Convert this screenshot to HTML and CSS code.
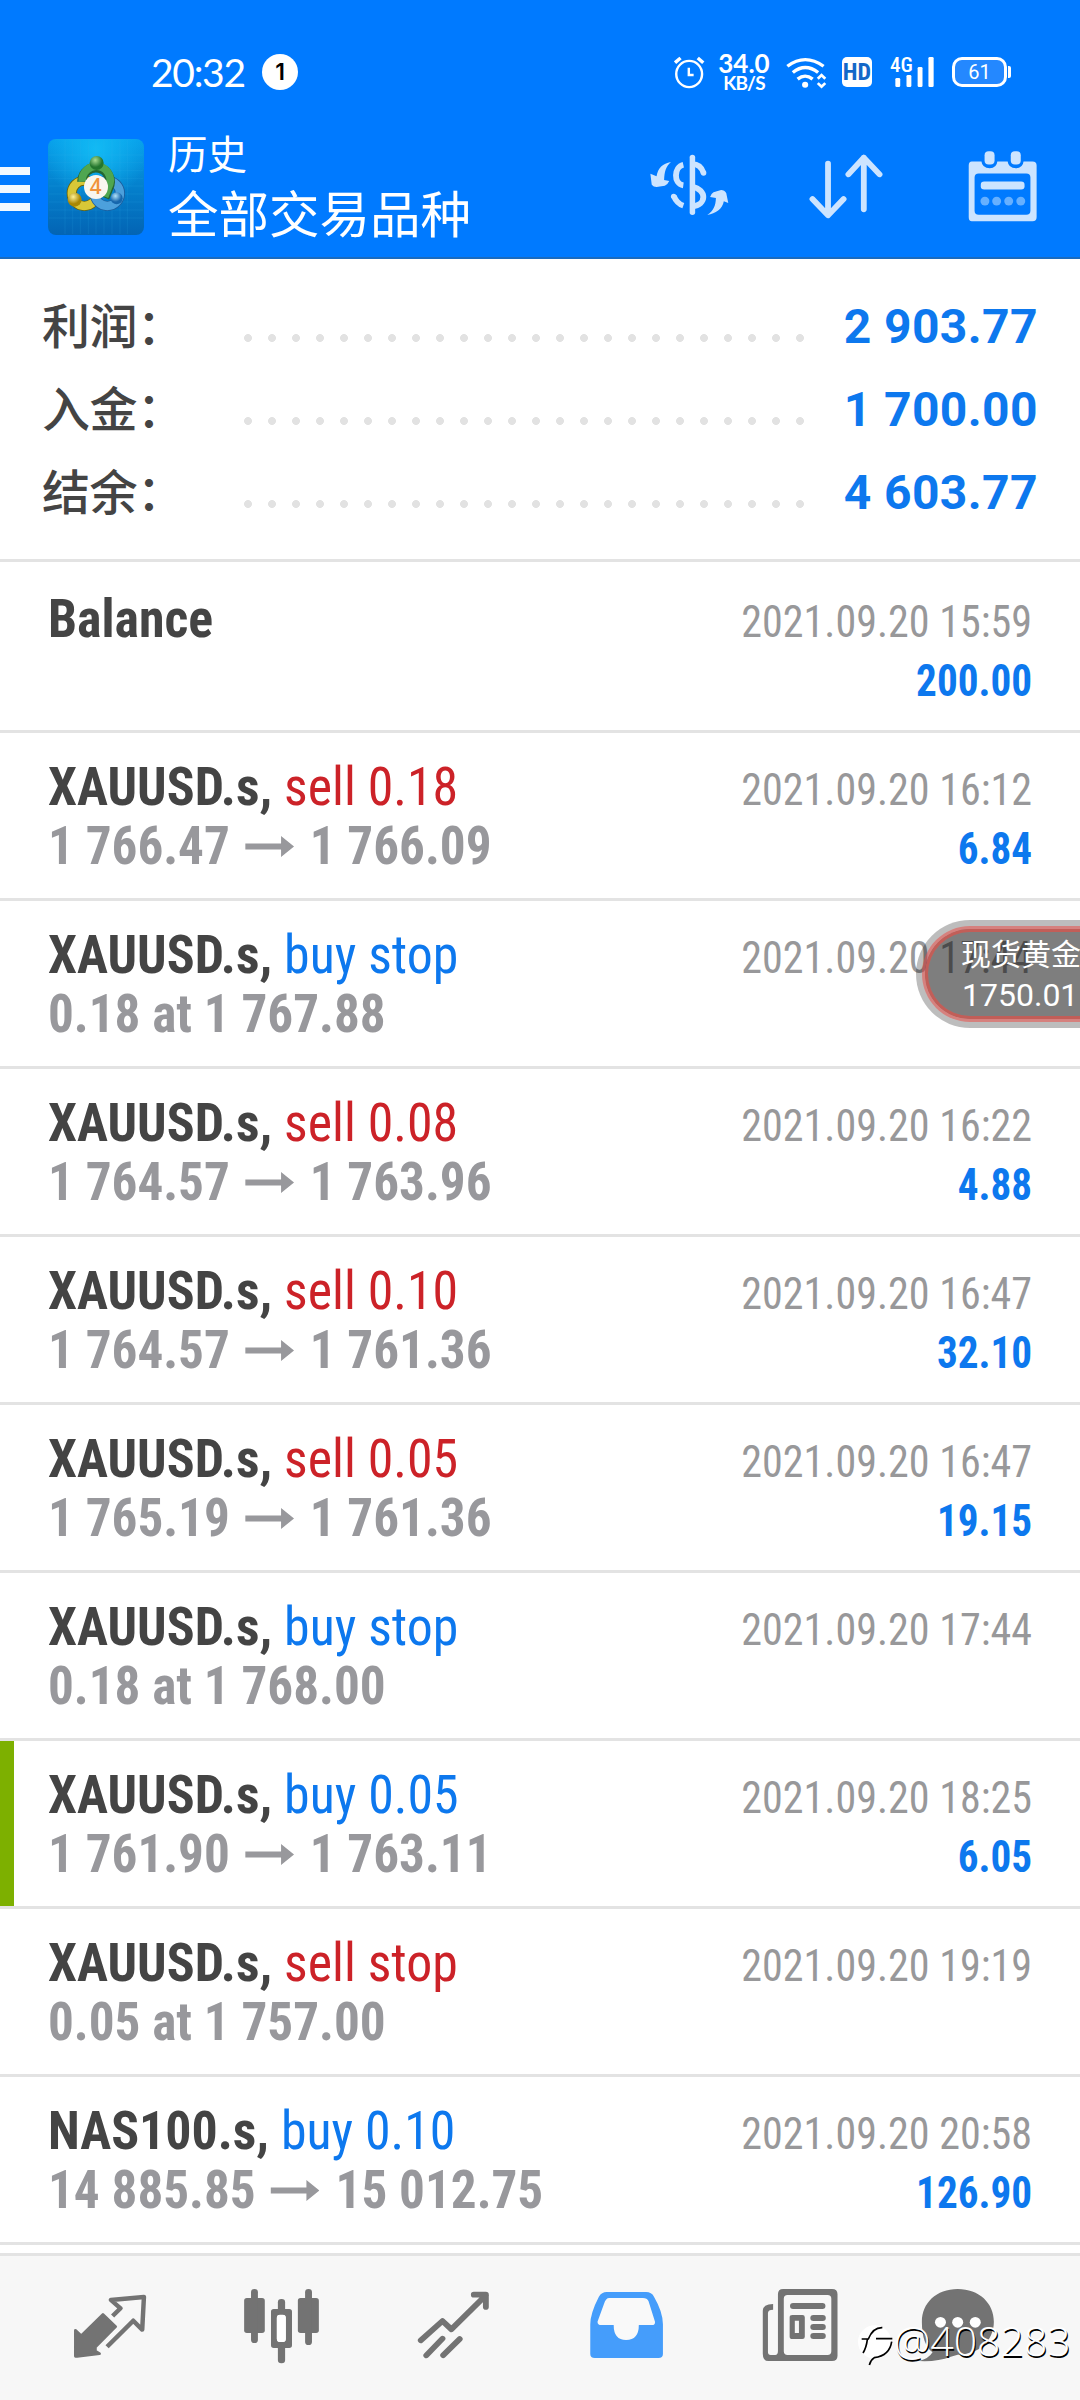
FILE: index.html
```html
<!DOCTYPE html>
<html lang="zh-CN">
<head>
<meta charset="utf-8">
<title>历史</title>
<link rel="stylesheet" href="styles.css">
</head>
<body>
<div class="screen">
  <header class="header">
    <div class="status">
      <span class="clock">20:32</span>
      <span class="count">1</span>
      <div class="indicators">
        <svg class="alarm" viewBox="388 168 90 99" preserveAspectRatio="none" fill="none" stroke="#fff" stroke-width="7"><ellipse cx="432" cy="222" rx="37.500" ry="39.500"/><path d="M431 203v22h14"/><path stroke-width="10" d="M391 188l16-14M473 188l-16-14"/></svg>
        <span class="speed"><b>34.0</b><small>KB/S</small></span>
        <svg class="wifi" viewBox="716 165 120 100" preserveAspectRatio="none" fill="none" stroke="#fff" stroke-width="10"><path d="M720 196q52-40 106 0M736 215q36-30 74 0M750 235q22-18 44 0"/><circle cx="772" cy="252" r="9" fill="#fff" stroke="none"/><path stroke-width="8" d="M809 234l11-11 11 11M809 247l11 11 11-11"/></svg>
        <span class="hd">HD</span>
        <span class="signal"><span class="net">4G</span>
          <svg class="bars" viewBox="1036 171 112 90" preserveAspectRatio="none" fill="#fff"><rect x="1037" y="234" width="14" height="27" rx="4"/><rect x="1069" y="225" width="14" height="36" rx="4"/><rect x="1101" y="201" width="14" height="60" rx="4"/><rect x="1132" y="171" width="15" height="90" rx="4"/></svg>
        </span>
        <span class="battery">61</span>
      </div>
    </div>
    <div class="titlebar">
      <div class="menu"><i></i><i></i><i></i></div>
      <svg class="logo" viewBox="24 27 288 288">
        <defs>
          <linearGradient id="bg" x2="0" y2="1"><stop offset="0" stop-color="#079fea"/><stop offset=".5" stop-color="#0480cc"/><stop offset="1" stop-color="#0364b4"/></linearGradient>
          <radialGradient id="glow" cx=".5" cy=".1" r=".55"><stop offset="0" stop-color="#12baf4"/><stop offset="1" stop-color="#12baf4" stop-opacity="0"/></radialGradient>
          <radialGradient id="g" cx=".4" cy=".3"><stop offset="0" stop-color="#a8dc92"/><stop offset="1" stop-color="#23762d"/></radialGradient>
          <radialGradient id="y" cx=".4" cy=".3"><stop offset="0" stop-color="#fff296"/><stop offset="1" stop-color="#a88705"/></radialGradient>
          <radialGradient id="b" cx=".4" cy=".3"><stop offset="0" stop-color="#b0e2fa"/><stop offset="1" stop-color="#1767ad"/></radialGradient>
        </defs>
        <rect x="24" y="27" width="288" height="288" rx="24" fill="url(#bg)"/>
        <rect x="24" y="27" width="288" height="288" rx="24" fill="url(#glow)"/>
        <path d="M75 30v282M98 30v282M121 30v282M145 30v282M168 30v282M192 30v282M216 30v282M240 30v282M262 30v282M27 75h282M27 98h282M27 121h282M27 145h282M27 168h282M27 192h282M27 216h282M27 240h282M27 264h282" stroke="#35b4ec" stroke-opacity=".22" stroke-width="2"/>
        <circle cx="133" cy="190" r="38" fill="none" stroke="#6d6407" stroke-width="30"/><circle cx="133" cy="190" r="38" fill="none" stroke="#d8c737" stroke-width="25"/>
        <circle cx="202" cy="190" r="38" fill="none" stroke="#1d5d9c" stroke-width="30"/><circle cx="202" cy="190" r="38" fill="none" stroke="#4ca0dc" stroke-width="25"/>
        <path d="M126 155a42 42 0 1 1 80 18l-12 30" fill="none" stroke="#246632" stroke-width="29"/><path d="M127 155a42 42 0 1 1 78 17l-11 28" fill="none" stroke="#4fa650" stroke-width="23"/>
        <circle cx="170" cy="99" r="21" fill="url(#g)"/><circle cx="104" cy="209" r="21" fill="url(#y)"/><circle cx="230" cy="205" r="18" fill="url(#b)"/>
        <circle cx="168" cy="171" r="36" fill="#f9f6ef"/>
        <text x="167" y="193" class="four" text-anchor="middle">4</text>
      </svg>
      <div class="titles"><span class="sub">历史</span><span class="main">全部交易品种</span></div>
      <div class="actions">
        <svg class="act-currency" viewBox="318 450 236 216" preserveAspectRatio="none" fill="none" stroke="#cce4ff" stroke-width="17">
          <path d="M444.500 472v165" stroke-width="16" stroke-linecap="round"/>
          <path d="M418 494c-27 6-30 58 0 62M390 588c5 12 13 24 28 29M444 492c18 0 28 11 33 27M444 560c43 8 43 55 0 59"/><circle cx="390" cy="589" r="8" fill="#cce4ff" stroke="none"/><circle cx="477" cy="519" r="8" fill="#cce4ff" stroke="none"/>
          <path fill="#cce4ff" stroke="none" d="M382 486c-24 4-38 18-42 43l-18-8 4 33q5 7 14 7l24-4q9-4 13-14l-15-3c1-25 5-40 20-54zM488 645c24-4 44-17 48-41l13 5-6-30q-5-9-15-9l-22 7q-8 5-10 14l17 3c-1 23-6 37-25 51z"/>
        </svg>
        <svg class="act-sort" viewBox="778 450 222 216" preserveAspectRatio="none" fill="none" stroke="#cce4ff" stroke-width="17" stroke-linecap="round" stroke-linejoin="round"><path d="M836.500 491v154M791 597l45.500 49 45.500-49M941 628V473M896 523l45-50 46 50"/></svg>
        <svg class="act-calendar" viewBox="1238 448 206 220" preserveAspectRatio="none"><path fill="#cce4ff" fill-rule="evenodd" d="M1252 483h28q2 20 24 20 20 0 22-20h30q2 20 24 20 20 0 22-20h26q12 0 12 12v156q0 12-12 12h-176q-9 0-9-12V495q0-12 9-12zM1272 519q-12 0-12 12v100q0 12 12 12h138q12 0 12-12V531q0-12-12-12z"/><rect x="1289" y="452" width="29" height="40" rx="12" fill="#cce4ff"/><rect x="1365" y="452" width="29" height="40" rx="12" fill="#cce4ff"/><rect x="1278" y="543" width="127" height="24" rx="10" fill="#cce4ff"/><g fill="#66b0ff"><circle cx="1290" cy="602" r="13"/><circle cx="1324" cy="602" r="13"/><circle cx="1359" cy="602" r="13"/><circle cx="1394" cy="602" r="13"/></g></svg>
      </div>
    </div>
  </header>

  <section class="summary">
    <div class="sum"><span class="label">利润：</span><span class="dots"></span><span class="value">2 903.77</span></div>
    <div class="sum"><span class="label">入金：</span><span class="dots"></span><span class="value">1 700.00</span></div>
    <div class="sum"><span class="label">结余：</span><span class="dots"></span><span class="value">4 603.77</span></div>
  </section>

  <main class="list">
    <article class="deal first"><div class="left"><div class="name">Balance</div></div><div class="right"><div class="date">2021.09.20 15:59</div><div class="amount">200.00</div></div></article>
    <article class="deal"><div class="left"><div class="name">XAUUSD.s, <span class="sell">sell 0.18</span></div><div class="price">1 766.47<svg class="arrow" viewBox="0 0 49 21" preserveAspectRatio="none"><path d="M0 7.500h36V0l13 10.500L36 21v-7.500H0z"/></svg>1 766.09</div></div><div class="right"><div class="date">2021.09.20 16:12</div><div class="amount">6.84</div></div></article>
    <article class="deal"><div class="left"><div class="name">XAUUSD.s, <span class="buy">buy stop</span></div><div class="price">0.18 at 1 767.88</div></div><div class="right"><div class="date">2021.09.20 17:44</div></div></article>
    <article class="deal"><div class="left"><div class="name">XAUUSD.s, <span class="sell">sell 0.08</span></div><div class="price">1 764.57<svg class="arrow" viewBox="0 0 49 21" preserveAspectRatio="none"><path d="M0 7.500h36V0l13 10.500L36 21v-7.500H0z"/></svg>1 763.96</div></div><div class="right"><div class="date">2021.09.20 16:22</div><div class="amount">4.88</div></div></article>
    <article class="deal"><div class="left"><div class="name">XAUUSD.s, <span class="sell">sell 0.10</span></div><div class="price">1 764.57<svg class="arrow" viewBox="0 0 49 21" preserveAspectRatio="none"><path d="M0 7.500h36V0l13 10.500L36 21v-7.500H0z"/></svg>1 761.36</div></div><div class="right"><div class="date">2021.09.20 16:47</div><div class="amount">32.10</div></div></article>
    <article class="deal"><div class="left"><div class="name">XAUUSD.s, <span class="sell">sell 0.05</span></div><div class="price">1 765.19<svg class="arrow" viewBox="0 0 49 21" preserveAspectRatio="none"><path d="M0 7.500h36V0l13 10.500L36 21v-7.500H0z"/></svg>1 761.36</div></div><div class="right"><div class="date">2021.09.20 16:47</div><div class="amount">19.15</div></div></article>
    <article class="deal"><div class="left"><div class="name">XAUUSD.s, <span class="buy">buy stop</span></div><div class="price">0.18 at 1 768.00</div></div><div class="right"><div class="date">2021.09.20 17:44</div></div></article>
    <article class="deal marked"><div class="left"><div class="name">XAUUSD.s, <span class="buy">buy 0.05</span></div><div class="price">1 761.90<svg class="arrow" viewBox="0 0 49 21" preserveAspectRatio="none"><path d="M0 7.500h36V0l13 10.500L36 21v-7.500H0z"/></svg>1 763.11</div></div><div class="right"><div class="date">2021.09.20 18:25</div><div class="amount">6.05</div></div></article>
    <article class="deal"><div class="left"><div class="name">XAUUSD.s, <span class="sell">sell stop</span></div><div class="price">0.05 at 1 757.00</div></div><div class="right"><div class="date">2021.09.20 19:19</div></div></article>
    <article class="deal"><div class="left"><div class="name">NAS100.s, <span class="buy">buy 0.10</span></div><div class="price">14 885.85<svg class="arrow" viewBox="0 0 49 21" preserveAspectRatio="none"><path d="M0 7.500h36V0l13 10.500L36 21v-7.500H0z"/></svg>15 012.75</div></div><div class="right"><div class="date">2021.09.20 20:58</div><div class="amount">126.90</div></div></article>
  </main>

  <nav class="tabs">
    <svg viewBox="69.700 78 499.500 432" preserveAspectRatio="none"><path fill="#737373" stroke="#737373" stroke-width="8" stroke-linejoin="round" d="M219 301l17 16 63-64 37 37-59 61 0 12 12 8-65 8h-5z"/><path fill="none" stroke="#737373" stroke-width="13" stroke-linejoin="round" d="M327 258l23-23-28-25 96-9-5 98-26-27-76 78" stroke-linecap="butt"/></svg>
    <svg viewBox="569.200 78 499.500 432" preserveAspectRatio="none"><g fill="#737373"><rect x="709" y="204" width="60" height="105" rx="8"/><rect x="729" y="177" width="20" height="162" rx="10"/><rect x="865" y="204" width="61" height="105" rx="8"/><rect x="886" y="177" width="20" height="168" rx="10"/><rect x="807" y="207" width="21" height="50" rx="10"/><rect x="807" y="345" width="21" height="55" rx="10"/><path fill-rule="evenodd" d="M795 237h45q8 0 8 8v101q0 8-8 8h-45q-8 0-8-8V245q0-8 8-8zM814 254q-10 0-10 10v62q0 10 10 10h6q10 0 10-10v-62q0-10-10-10z"/></g><rect x="804" y="254" width="26" height="82" rx="9" fill="#fff"/></svg>
    <svg viewBox="1068.700 78 499.500 432" preserveAspectRatio="none" fill="none" stroke="#737373" stroke-width="17" stroke-linecap="round" stroke-linejoin="round"><path d="M1222 331l63-58 26 25 100-102M1376 194h35v37M1238 376l47-50M1287 376l48-49"/></svg>
    <svg viewBox="0 78 499.500 432" preserveAspectRatio="none"><path fill="#459dfb" d="M194 186h114q16 0 23 14 26 46 26 83v89q0 12-13 12H159q-13 0-13-12v-89q0-33 25-83 8-14 23-14z"/><path fill="#f9f9f9" d="M201 204h98q12 0 16 9l19 62q1 10-9 10h-38q0 45-37 45-36 0-36-45h-36q-11 0-11-10l19-54q5-17 15-17z"/></svg>
    <svg viewBox="499.500 78 499.500 432" preserveAspectRatio="none"><path fill="#737373" fill-rule="evenodd" d="M706 177h142q16 0 16 16v184q0 16-16 16H663q-16 0-16-22V242q0-19 30-20v17q-15 0-15 10v117q0 9 8 9h13q8 0 8-12V193q0-16 15-16zM719 195q-11 0-11 11v158q0 11 11 11h116q11 0 11-11V206q0-11-11-11z"/><g fill="#737373"><rect x="726" y="219" width="103" height="18" rx="9"/><path fill-rule="evenodd" d="M733 255h29q7 0 7 7v58q0 7-7 7h-29q-8 0-8-7v-58q0-7 8-7zM740 272v37h12v-37z"/><rect x="785" y="255" width="45" height="18" rx="9"/><rect x="785" y="282" width="45" height="18" rx="9"/><rect x="785" y="309" width="45" height="18" rx="9"/></g></svg>
    <svg viewBox="999 78 499.500 432" preserveAspectRatio="none"><path fill="#737373" d="M1213 177c62 0 105 42 105 98s-43 99-105 99l-20 6q-40 16-92 13 28-7 39-26c-20-16-31-45-31-92 0-56 42-98 104-98z"/><g fill="#fff"><circle cx="1163" cy="277" r="16"/><circle cx="1213" cy="277" r="16"/><circle cx="1264" cy="277" r="16"/></g></svg>
  </nav>

  <div class="floating"><div class="float-ring"><span class="float-name">现货黄金</span><span class="float-price">1750.01</span></div></div>

  <div class="watermark">
    <svg viewBox="50 125 108 135" width="36" height="45"><circle cx="103" cy="185" r="50" fill="#fff"/><path fill="none" stroke="#000" stroke-width="5" d="M107 175h49M64 176h20q14-35 42-34M81 178q-3 24-13 40M154 184q-6 42-52 48-12 8-15 22"/></svg>
    <span>@408283</span>
  </div>
</div>
</body>
</html>
```
FILE: styles.css
```css
* { box-sizing: border-box; }
body { margin: 0; background: #fff; }
.screen {
  position: relative;
  width: 1080px;
  height: 2400px;
  overflow: hidden;
  display: flex;
  flex-direction: column;
  background: #fff;
  font-family: Roboto, "Noto Sans CJK SC", sans-serif;
}
svg { display: block; flex: none; }

/* header */
.header { height: 259px; background: #007aff; border-bottom: 2px solid #1a6bbf; color: #fff; flex: none; }
.status { height: 130px; padding: 14px 69px 0 151px; display: flex; align-items: center; }
.clock { width: 111px; font: 400 39px/1 Lato, sans-serif; letter-spacing: -1.300px; }
.count { width: 36px; height: 36px; border-radius: 50%; background: #fff; color: #000; font: 600 23px/37px Inter, sans-serif; text-align: center; }
.indicators { margin-left: auto; display: flex; align-items: center; }
.alarm { width: 31px; height: 33px; }
.speed { width: 52px; margin-left: 13px; display: flex; flex-direction: column; align-items: center; font-family: Lato, sans-serif; }
.speed b { font-size: 26px; line-height: 22px; font-weight: 700; }
.speed small { font-size: 19px; line-height: 18px; font-weight: 700; letter-spacing: -.8px; }
.wifi { width: 41px; height: 33px; margin-left: 16px; }
.hd { width: 30px; height: 30px; margin-left: 15px; border-radius: 5px; background: #fff; color: #1468c8; font: 700 24px/30px "Roboto Condensed", sans-serif; text-align: center; }
.signal { margin-left: 18px; height: 30px; display: flex; align-items: flex-end; width: 44px; }
.net { width: 5px; align-self: flex-start; font: 500 21px/16px "Roboto Condensed", sans-serif; }
.bars { width: 39px; height: 30px; }
.battery {
  position: relative; width: 55px; height: 30px; margin: 0 4px 0 18px; border: 3px solid #fff; border-radius: 10px;
  background: #2488ff; font: 400 20px/25px Roboto, sans-serif; text-align: center;
}
.battery::after { content: ""; position: absolute; left: 53px; top: 6px; width: 3px; height: 12px; border-radius: 0 2px 2px 0; background: #fff; }
.titlebar { display: flex; height: 127px; }
.menu { width: 30px; padding-top: 37px; display: flex; flex-direction: column; gap: 10px; }
.menu i { height: 8px; background: #f2f9ff; }
.logo { width: 96px; height: 96px; margin: 9px 0 0 18px; }
.four { font: 600 62px "Open Sans", sans-serif; fill: #f0923c; }
.titles { margin: -2px 0 0 24px; display: flex; flex-direction: column; font-family: "Noto Sans CJK SC", sans-serif; font-weight: 400; }
.sub { font-size: 39.500px; line-height: 48px; }
.main { font-size: 50.500px; line-height: 70px; }
.actions { margin-left: auto; padding: 20px 42px 0 0; display: flex; }
.act-currency { width: 81px; height: 72px; }
.act-sort { width: 76px; height: 72px; margin-left: 78px; }
.act-calendar { width: 71px; height: 73px; margin-left: 83px; }

/* totals */
.summary { height: 303px; padding: 26px 42px 0; border-bottom: 3px solid #e3e3e3; flex: none; }
.sum { height: 83px; display: flex; }
.label { width: 196px; font: 500 48px/76px "Noto Sans CJK SC", sans-serif; letter-spacing: -.5px; color: #444; }
.dots { width: 576px; height: 8px; margin: 49px 0 0 -2px; background: radial-gradient(circle at 12px 4px, #e2e2e2 3.600px, transparent 4.300px) 0 0 / 24px 8px; }
.value { margin-left: auto; font-weight: 700; font-size: 48px; line-height: 83px; letter-spacing: .4px; color: #0d78ee; }

/* deals */
.list { flex: none; font-family: "Roboto Condensed", sans-serif; }
.deal { height: 168px; padding: 24px 48px 0; border-bottom: 3px solid #e3e3e3; display: flex; justify-content: space-between; white-space: nowrap; }
.first { height: 171px; padding-top: 27px; }
.marked { box-shadow: inset 14px 0 #7db000; }
.name, .price { font-size: 54.500px; line-height: 59px; font-weight: 700; color: #444; transform: scaleX(.951); transform-origin: 0 0; }
.price { color: #98989c; display: flex; transform: scaleX(.939); }
.name span { font-weight: 400; }
.name .sell { color: #cc2228; }
.name .buy { color: #0d78ee; }
.arrow { width: 52px; height: 21px; margin: 20px 17px 0 16px; fill: #98989c; }
.right { padding-top: 3px; text-align: right; }
.date, .amount { font-size: 45px; line-height: 59px; color: #98989a; transform: scaleX(.935); transform-origin: 100% 0; }
.amount { font-weight: 700; color: #0d78ee; transform: scaleX(.915); }

/* bottom tabs */
.tabs { margin-top: 8px; height: 147px; border-top: 3px solid #e3e3e3; background: #f7f7f7; padding-left: 24px; display: flex; flex: none; }
.tabs svg { width: 172px; height: 144px; }

/* price bubble over the list */
.floating { position: absolute; left: 916px; top: 920px; width: 240px; height: 108px; border-radius: 54px; padding: 6px; overflow: hidden; background: rgba(0, 0, 0, .26); }
.float-ring { height: 96px; border-radius: 48px; border: 3px solid rgba(235, 80, 75, .55); box-shadow: inset 0 0 0 3px #c25e58; background: rgba(0, 0, 0, .33); background-clip: padding-box; padding: 6px 0 0 36px; display: flex; flex-direction: column; color: #fff; }
.float-name { font-size: 30px; line-height: 39px; }
.float-price { font-size: 32px; line-height: 43px; margin-left: 1px; }

.watermark { position: absolute; left: 857px; top: 2316px; display: flex; color: #fff; font: 300 41px/48px "Open Sans", sans-serif; text-shadow: 1px 1.500px 0 #000; }
.watermark svg { margin-top: 6px; }
.watermark span { margin-left: 1px; }
```
